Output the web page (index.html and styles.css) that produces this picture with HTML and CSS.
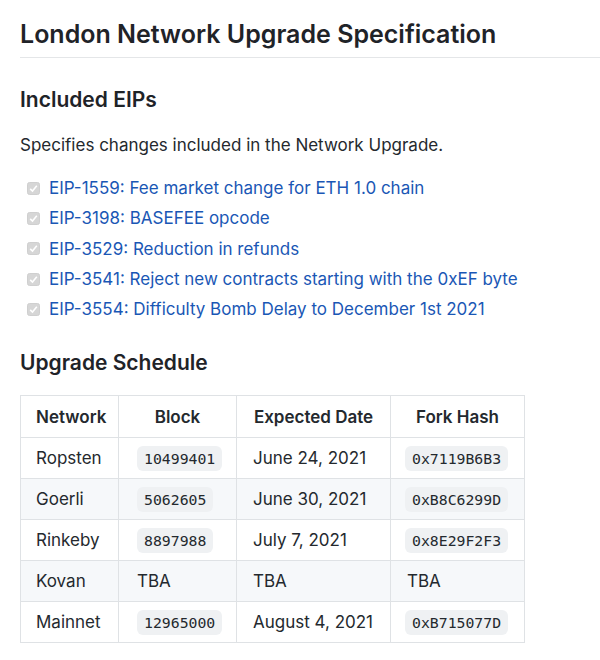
FILE: index.html
```html
<!DOCTYPE html>
<html>
<head>
<meta charset="utf-8">
<link rel="stylesheet" href="styles.css">
</head>
<body>
<div class="page">
  <h1 class="title">London Network Upgrade Specification</h1>
  <h2 class="section">Included EIPs</h2>
  <p class="para">Specifies changes included in the Network Upgrade.</p>
  <ul class="tasks">
    <li class="task"><span class="box"><svg viewBox="0 0 13 13" width="13" height="13"><rect x="0.5" y="0.5" width="12" height="12" rx="2" fill="#d6d6d6" stroke="#cfcfcf"/><path d="M3.2 6.8 L5.5 9 L9.8 3.8" fill="none" stroke="#fff" stroke-width="1.6"/></svg></span><a class="link">EIP-1559: Fee market change for ETH 1.0 chain</a></li>
    <li class="task"><span class="box"><svg viewBox="0 0 13 13" width="13" height="13"><rect x="0.5" y="0.5" width="12" height="12" rx="2" fill="#d6d6d6" stroke="#cfcfcf"/><path d="M3.2 6.8 L5.5 9 L9.8 3.8" fill="none" stroke="#fff" stroke-width="1.6"/></svg></span><a class="link">EIP-3198: BASEFEE opcode</a></li>
    <li class="task"><span class="box"><svg viewBox="0 0 13 13" width="13" height="13"><rect x="0.5" y="0.5" width="12" height="12" rx="2" fill="#d6d6d6" stroke="#cfcfcf"/><path d="M3.2 6.8 L5.5 9 L9.8 3.8" fill="none" stroke="#fff" stroke-width="1.6"/></svg></span><a class="link">EIP-3529: Reduction in refunds</a></li>
    <li class="task"><span class="box"><svg viewBox="0 0 13 13" width="13" height="13"><rect x="0.5" y="0.5" width="12" height="12" rx="2" fill="#d6d6d6" stroke="#cfcfcf"/><path d="M3.2 6.8 L5.5 9 L9.8 3.8" fill="none" stroke="#fff" stroke-width="1.6"/></svg></span><a class="link">EIP-3541: Reject new contracts starting with the 0xEF byte</a></li>
    <li class="task"><span class="box"><svg viewBox="0 0 13 13" width="13" height="13"><rect x="0.5" y="0.5" width="12" height="12" rx="2" fill="#d6d6d6" stroke="#cfcfcf"/><path d="M3.2 6.8 L5.5 9 L9.8 3.8" fill="none" stroke="#fff" stroke-width="1.6"/></svg></span><a class="link">EIP-3554: Difficulty Bomb Delay to December 1st 2021</a></li>
  </ul>
  <h2 class="section sched">Upgrade Schedule</h2>
  <table class="tbl">
    <colgroup><col class="c1"><col class="c2"><col class="c3"><col class="c4"></colgroup>
    <thead>
      <tr><th class="left">Network</th><th>Block</th><th>Expected Date</th><th>Fork Hash</th></tr>
    </thead>
    <tbody>
      <tr><td>Ropsten</td><td><code class="code">10499401</code></td><td>June 24, 2021</td><td><code class="code">0x7119B6B3</code></td></tr>
      <tr class="alt"><td>Goerli</td><td><code class="code">5062605</code></td><td>June 30, 2021</td><td><code class="code">0xB8C6299D</code></td></tr>
      <tr><td>Rinkeby</td><td><code class="code">8897988</code></td><td>July 7, 2021</td><td><code class="code">0x8E29F2F3</code></td></tr>
      <tr class="alt"><td>Kovan</td><td>TBA</td><td>TBA</td><td>TBA</td></tr>
      <tr><td>Mainnet</td><td><code class="code">12965000</code></td><td>August 4, 2021</td><td><code class="code">0xB715077D</code></td></tr>
    </tbody>
  </table>
</div>
</body>
</html>
```
FILE: styles.css
```css
html, body {
  margin: 0;
  padding: 0;
  background: #fff;
}
.page {
  padding: 0 0 0 20px;
  font-family: Inter, "Liberation Sans", Arial, sans-serif;
  color: #24292e;
  font-size: 17px;
}
.title {
  margin: 0;
  padding: 16px 0 5px;
  font-size: 25px;
  font-weight: 600;
  line-height: 36px;
  border-bottom: 1px solid #e4e6e8;
  color: #1f2328;
}
.section {
  margin: 0;
  padding-top: 27px;
  font-size: 21px;
  line-height: 30px;
  font-weight: 600;
  color: #1f2328;
}
.para {
  margin: 16px 0 0;
  line-height: 28px;
}
.tasks {
  list-style: none;
  margin: 14px 0 0;
  padding: 0 0 0 7px;
}
.task {
  display: flex;
  align-items: center;
  height: 30.3px;
}
.box {
  display: flex;
  width: 13px;
  height: 13px;
  margin-right: 9px;
}
.link {
  color: #1a57b5;
  text-decoration: none;
}
.sched {
  padding-top: 24px;
}
.tbl {
  margin-top: 17px;
  border-collapse: collapse;
  table-layout: fixed;
  width: 504px;
  font-size: 17px;
}
.c1 { width: 98px; }
.c2 { width: 118px; }
.c3 { width: 154px; }
.c4 { width: 134px; }
.tbl th, .tbl td {
  border: 1px solid #dfe2e5;
  height: 40px;
  padding: 0 0 0 14px;
  text-align: left;
  white-space: nowrap;
}
.tbl th {
  height: 41px;
  text-align: center;
  padding: 0;
  font-weight: 600;
}
.tbl th.left {
  text-align: left;
  padding-left: 15px;
}
.tbl td:nth-child(1) { padding-left: 15px; }
.tbl td:nth-child(2) { padding-left: 18px; }
.tbl td:nth-child(3) { padding-left: 16px; }
.tbl td:nth-child(4) { padding-left: 16px; }
.alt td {
  background: #f6f8fa;
}
.code {
  font-family: "DejaVu Sans Mono", "Liberation Mono", monospace;
  font-size: 14.8px;
  background: #eff1f3;
  border-radius: 6px;
  padding: 4px 7px;
  color: #24292e;
}
.tbl td:nth-child(4) .code { margin-left: -2px; }
```
